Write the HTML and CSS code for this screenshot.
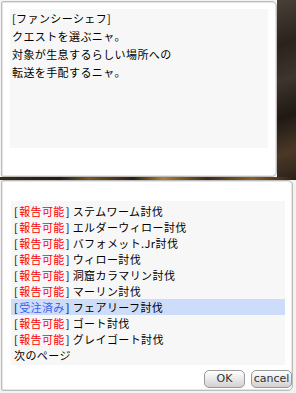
FILE: index.html
```html
<!DOCTYPE html>
<html lang="ja">
<head>
    <meta charset="UTF-8">
    <meta name="viewport" content="width=device-width, initial-scale=1.0">
    <title>クエスト選択</title>
    <link rel="stylesheet" href="styles.css">
</head>
<body>
    <div class="screen">
        <div class="top-row">
            <div class="window talk-window">
                <div class="message">
                    <p>[ファンシーシェフ]</p>
                    <p>クエストを選ぶニャ。</p>
                    <p>対象が生息するらしい場所への</p>
                    <p>転送を手配するニャ。</p>
                </div>
            </div>
            <div class="scenery"></div>
        </div>

        <div class="divider"></div>

        <div class="window menu-window">
            <ul class="quest-list">
                <li><span class="tag">[<em class="ready">報告可能</em>]</span> ステムワーム討伐</li>
                <li><span class="tag">[<em class="ready">報告可能</em>]</span> エルダーウィロー討伐</li>
                <li><span class="tag">[<em class="ready">報告可能</em>]</span> バフォメット.Jr討伐</li>
                <li><span class="tag">[<em class="ready">報告可能</em>]</span> ウィロー討伐</li>
                <li><span class="tag">[<em class="ready">報告可能</em>]</span> 洞窟カラマリン討伐</li>
                <li><span class="tag">[<em class="ready">報告可能</em>]</span> マーリン討伐</li>
                <li class="selected"><span class="tag">[<em class="accepted">受注済み</em>]</span> フェアリーフ討伐</li>
                <li><span class="tag">[<em class="ready">報告可能</em>]</span> ゴート討伐</li>
                <li><span class="tag">[<em class="ready">報告可能</em>]</span> グレイゴート討伐</li>
                <li>次のページ</li>
            </ul>
            <div class="buttons">
                <button class="btn">OK</button>
                <button class="btn">cancel</button>
            </div>
        </div>
    </div>
</body>
</html>
```

FILE: styles.css
```css
* {
    margin: 0;
    padding: 0;
    box-sizing: border-box;
}

body {
    width: 296px;
    height: 393px;
    overflow: hidden;
    background-color: #f2f2f2;
    font-family: "Noto Sans CJK JP", "DejaVu Sans", sans-serif;
    font-size: 11px;
    letter-spacing: 0.4px;
    color: #000;
}

.screen {
    display: flex;
    flex-direction: column;
    height: 393px;
}

.top-row {
    display: flex;
    height: 177px;
    background-color: #f4f4f4;
}

.window {
    background-color: #fff;
    border: 1px solid #bcbcbc;
    box-shadow: inset 0 0 0 1px #e6e6e6;
}

.talk-window {
    width: 276px;
    height: 176px;
    margin: 1px 0 0 1px;
    border-radius: 2px 5px 5px 2px;
}

.scenery {
    flex: 1;
    background: linear-gradient(160deg, #4a4038 0%, #2a221c 25%, #3c342d 45%, #1f1914 65%, #4b3826 85%, #2d231b 100%);
}

.message {
    margin: 7px 8px 0 8px;
    height: 139px;
    padding-left: 2px;
    background-color: #f7f7f7;
    line-height: 18px;
}

.divider {
    height: 3px;
    background: linear-gradient(90deg, #3c2a18 0%, #1e1a14 20%, #7a5520 30%, #2a1d12 45%, #b08030 55%, #3a2a18 70%, #8a6028 85%, #2a1d12 100%);
}

.menu-window {
    width: 292px;
    height: 211px;
    margin-left: 1px;
    border-radius: 2px 5px 5px 2px;
    padding: 20px 0 0 9px;
}

.quest-list {
    list-style: none;
    width: 274px;
    height: 164px;
    padding: 2px 0;
    background-color: #f7f7f7;
}

.quest-list li {
    height: 16px;
    line-height: 16px;
    padding-left: 3px;
    white-space: nowrap;
}

.quest-list li.selected {
    background-color: #cddcf8;
}

.tag em {
    font-style: normal;
    margin: 0 1px;
}

.ready {
    color: #ff0000;
}

.accepted {
    color: #3f5ff0;
}

.buttons {
    display: flex;
    justify-content: flex-end;
    gap: 6px;
    margin-top: 5px;
}

.btn {
    width: 41px;
    height: 18px;
    border: 1px solid #9a9a9a;
    border-radius: 5px;
    background: linear-gradient(#ffffff, #e4e4e4 60%, #d0d0d0);
    font-family: "DejaVu Sans", sans-serif;
    font-size: 11px;
    letter-spacing: 0;
    color: #333;
    line-height: 16px;
}
```
